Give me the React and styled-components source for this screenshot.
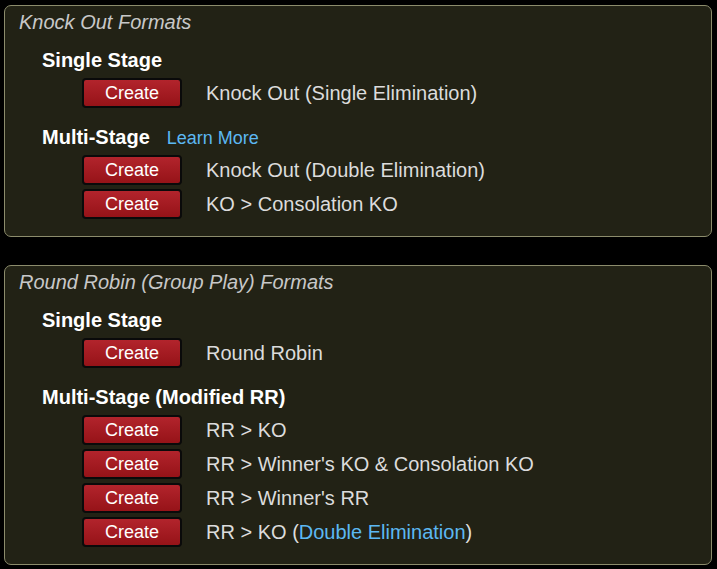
import React from "react";
import styled, { createGlobalStyle } from "styled-components";

const GlobalStyle = createGlobalStyle`
  body {
    margin: 0;
    background: #000000;
    font-family: "Liberation Sans", Arial, sans-serif;
  }
`;

const sections = [
  {
    title: "Knock Out Formats",
    groups: [
      { heading: "Single Stage", items: [["Knock Out (Single Elimination)"]] },
      {
        heading: "Multi-Stage",
        learnMore: true,
        items: [["Knock Out (Double Elimination)"], ["KO > Consolation KO"]],
      },
    ],
  },
  {
    title: "Round Robin (Group Play) Formats",
    groups: [
      { heading: "Single Stage", items: [["Round Robin"]] },
      {
        heading: "Multi-Stage (Modified RR)",
        items: [
          ["RR > KO"],
          ["RR > Winner's KO & Consolation KO"],
          ["RR > Winner's RR"],
          ["RR > KO (", "Double Elimination", ")"],
        ],
      },
    ],
  },
];

const App = () => {
  return (
    <>
      <GlobalStyle />
      <Page>
        {sections.map((section) => (
          <Panel key={section.title}>
            <Title>{section.title}</Title>
            {section.groups.map((group) => (
              <Group key={group.heading}>
                <Heading>
                  {group.heading}
                  {group.learnMore && <Link>Learn More</Link>}
                </Heading>
                <Rows>
                  {group.items.map(([before, link, after]) => (
                    <Row key={before + (link || "")}>
                      <CreateButton>Create</CreateButton>
                      <Label>
                        {before}
                        {link && <InlineLink>{link}</InlineLink>}
                        {after}
                      </Label>
                    </Row>
                  ))}
                </Rows>
              </Group>
            ))}
          </Panel>
        ))}
      </Page>
    </>
  );
};

// ── Styled Components ─────────────────────────────────────────
const Page = styled.div`
  display: flex;
  flex-direction: column;
  gap: 28px;
  padding: 5px 5px 0 4px;
`;

const Panel = styled.section`
  background-color: #222215;
  border: 1px solid #8c8c6c;
  border-radius: 7px;
  padding: 5px 14px 17px 14px;
`;

const Title = styled.div`
  font-size: 20px;
  font-style: italic;
  line-height: 22px;
  height: 22px;
  color: #c8c8c8;
`;

const Group = styled.div`
  margin-top: 16px;
  padding-left: 23px;

  & + & {
    margin-top: 18px;
  }
`;

const Heading = styled.div`
  display: flex;
  align-items: baseline;
  height: 22px;
  font-size: 20px;
  font-weight: 700;
  line-height: 22px;
  color: #ffffff;
`;

const Link = styled.span`
  font-size: 18px;
  font-weight: 400;
  line-height: 22px;
  color: #5cb8f2;
  margin-left: 17px;
  cursor: pointer;
`;

const Rows = styled.div`
  display: flex;
  flex-direction: column;
  gap: 4px;
  margin-top: 7px;
  padding-left: 40px;
`;

const Row = styled.div`
  display: flex;
  align-items: center;
  gap: 24px;
`;

const CreateButton = styled.button`
  width: 100px;
  height: 30px;
  border: 2px solid #0a0a0a;
  border-radius: 4px;
  background: linear-gradient(#b2242c, #961318);
  color: #ffffff;
  font-family: "Liberation Sans", Arial, sans-serif;
  font-size: 18px;
  padding: 0;
  cursor: pointer;
`;

const Label = styled.span`
  font-size: 20px;
  line-height: 24px;
  color: #dcdcdc;
`;

const InlineLink = styled.span`
  color: #5cb8f2;
  cursor: pointer;
`;

export default App;
